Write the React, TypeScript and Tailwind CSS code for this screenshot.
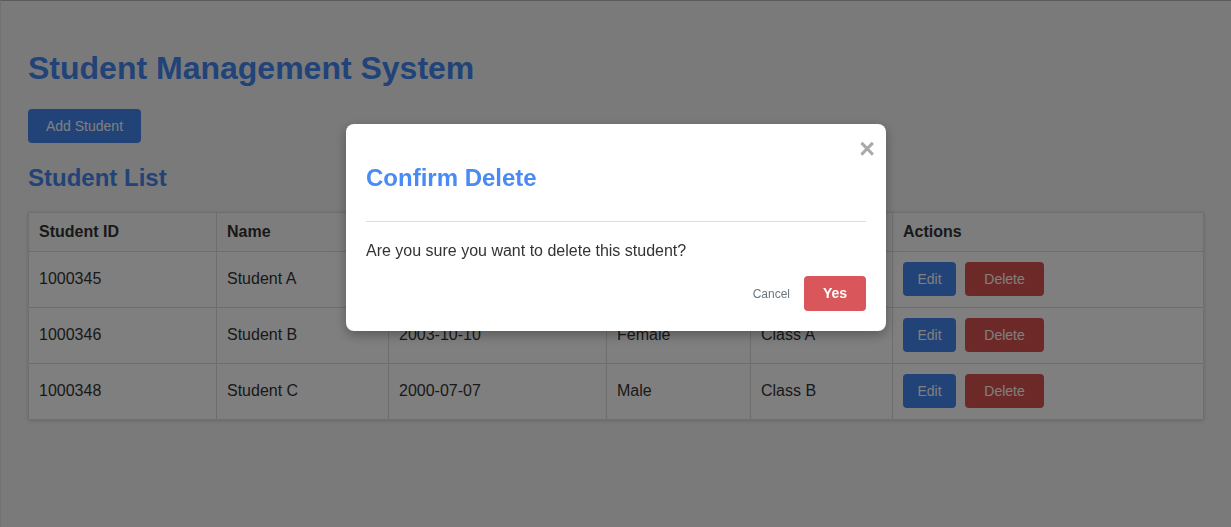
const students = [
  { id: "1000345", name: "Student A", dob: "2001-05-12", gender: "Male", cls: "Class A" },
  { id: "1000346", name: "Student B", dob: "2003-10-10", gender: "Female", cls: "Class A" },
  { id: "1000348", name: "Student C", dob: "2000-07-07", gender: "Male", cls: "Class B" },
];

export default function App() {
  return (
    <div className="relative min-h-screen bg-[#f5f5f5] border-t border-t-[#b4b4b4] border-l border-l-[#e4e4e4] font-['Liberation_Sans',Arial,sans-serif] text-[#333]">
      <div className="px-[27px] pt-[49px]">
        <h1 className="text-[32px] leading-[37px] font-bold text-[#4286f0]">
          Student Management System
        </h1>

        <button className="mt-[22px] h-[34px] w-[113px] rounded-[4px] bg-[#4286f0] text-[14px] text-white">
          Add Student
        </button>

        <h2 className="mt-[21px] text-[24px] leading-[28px] font-bold text-[#4286f0]">
          Student List
        </h2>

        <table className="mt-[20px] w-full border-collapse bg-white text-[16px] shadow-[0_1px_4px_rgba(0,0,0,0.15)]">
          <thead>
            <tr className="h-[39px] bg-[#fafafa]">
              <th className="w-[188px] border border-[#ddd] px-[10px] text-left font-bold">Student ID</th>
              <th className="w-[172px] border border-[#ddd] px-[10px] text-left font-bold">Name</th>
              <th className="w-[218px] border border-[#ddd] px-[10px] text-left font-bold">Date of Birth</th>
              <th className="w-[144px] border border-[#ddd] px-[10px] text-left font-bold">Gender</th>
              <th className="w-[142px] border border-[#ddd] px-[10px] text-left font-bold">Class</th>
              <th className="border border-[#ddd] px-[10px] text-left font-bold">Actions</th>
            </tr>
          </thead>
          <tbody>
            {students.map((s) => (
              <tr key={s.id} className="h-[56px]">
                <td className="border border-[#ddd] px-[10px] pb-px">{s.id}</td>
                <td className="border border-[#ddd] px-[10px] pb-px">{s.name}</td>
                <td className="border border-[#ddd] px-[10px] pb-px">{s.dob}</td>
                <td className="border border-[#ddd] px-[10px] pb-px">{s.gender}</td>
                <td className="border border-[#ddd] px-[10px] pb-px">{s.cls}</td>
                <td className="border border-[#ddd] px-[10px] pb-px">
                  <div className="flex gap-[9px]">
                    <button className="h-[34px] w-[53px] rounded-[4px] bg-[#4286f0] text-[14px] text-white">
                      Edit
                    </button>
                    <button className="h-[34px] w-[79px] rounded-[4px] bg-[#d9534f] text-[14px] text-white">
                      Delete
                    </button>
                  </div>
                </td>
              </tr>
            ))}
          </tbody>
        </table>
      </div>

      {/* Delete confirmation */}
      <div className="fixed inset-0 bg-black/50">
        <div className="relative ml-[346px] mt-[124px] w-[540px] rounded-[8px] bg-white p-5 shadow-[0_4px_12px_rgba(0,0,0,0.3)]">
          <span className="absolute right-[11px] top-[12px] text-[27px] leading-none font-bold text-[#aaa]">
            ×
          </span>
          <h2 className="mt-5 text-[24px] leading-[28px] font-bold text-[#4a8af4]">
            Confirm Delete
          </h2>
          <hr className="mt-[29px] border-t border-[#ddd]" />
          <p className="mt-[20px] text-[16px] leading-[18px] text-[#333]">
            Are you sure you want to delete this student?
          </p>
          <div className="mt-4 flex items-center justify-end gap-[14px]">
            <button className="text-[12px] text-[#6c757d]">Cancel</button>
            <button className="h-[35px] w-[62px] rounded-[4px] bg-[#d9575a] text-[14px] font-bold text-white">
              Yes
            </button>
          </div>
        </div>
      </div>
    </div>
  );
}
